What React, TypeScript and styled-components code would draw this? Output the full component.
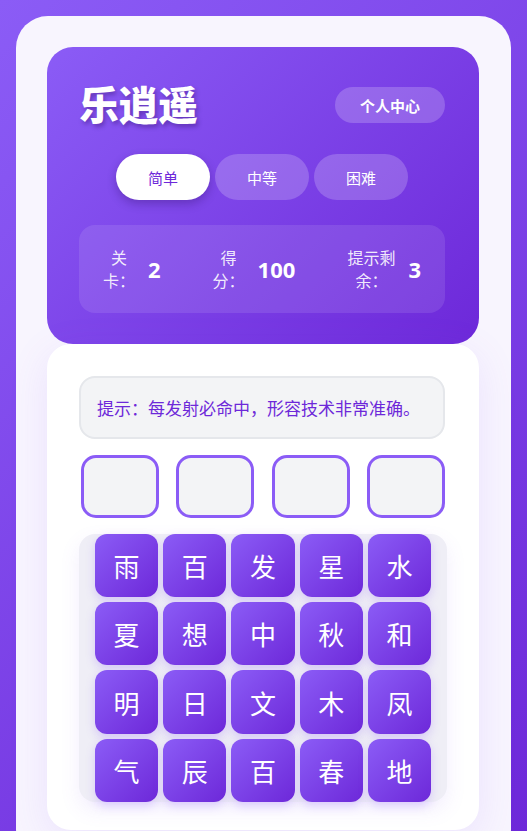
import { createGlobalStyle, styled } from "styled-components";

const GlobalStyle = createGlobalStyle`
  html, body {
    margin: 0;
    min-height: 100%;
  }
  body {
    background: linear-gradient(135deg, #8b5cf6 0%, #6d28d9 100%);
    background-attachment: fixed;
    font-family: "Noto Sans", "Noto Sans CJK SC", sans-serif;
  }
`;

const LEVELS = ["简单", "中等", "困难"];

const STATS = [
  { label: "关卡：", value: "2", width: 2 },
  { label: "得分：", value: "100", width: 2 },
  { label: "提示剩余：", value: "3", width: 3 },
];

const CHARS = [
  "雨", "百", "发", "星", "水",
  "夏", "想", "中", "秋", "和",
  "明", "日", "文", "木", "凤",
  "气", "辰", "百", "春", "地",
];

const App = () => {
  return (
    <>
      <GlobalStyle />
      <Panel>
        <HeaderCard>
          <TitleRow>
            <Title>乐逍遥</Title>
            <ProfileButton>个人中心</ProfileButton>
          </TitleRow>

          <LevelRow>
            {LEVELS.map((level, i) => (
              <LevelButton key={level} $active={i === 0}>
                {level}
              </LevelButton>
            ))}
          </LevelRow>

          <StatsBox>
            {STATS.map((stat) => (
              <StatItem key={stat.label}>
                <StatLabel $width={stat.width}>{stat.label}</StatLabel>
                <StatValue>{stat.value}</StatValue>
              </StatItem>
            ))}
          </StatsBox>
        </HeaderCard>

        <GameCard>
          <HintBox>提示：每发射必命中，形容技术非常准确。</HintBox>

          <SlotRow>
            {[0, 1, 2, 3].map((i) => (
              <Slot key={i} />
            ))}
          </SlotRow>

          <CharGrid>
            {CHARS.map((c, i) => (
              <CharTile key={i}>{c}</CharTile>
            ))}
          </CharGrid>
        </GameCard>
      </Panel>
    </>
  );
};

export default App;

const Panel = styled.div`
  margin: 16px 16px 0;
  padding: 31px 32px 32px 31px;
  background: #f8f5fe;
  border-radius: 32px;
`;

const HeaderCard = styled.div`
  padding: 32px 34px 31px 32px;
  border-radius: 26px;
  background: linear-gradient(135deg, #8b5cf6 0%, #6d28d9 100%);
  color: #fff;
`;

const TitleRow = styled.div`
  display: flex;
  align-items: center;
  justify-content: space-between;
`;

const Title = styled.h1`
  margin: 0;
  font-family: "Noto Sans CJK SC", sans-serif;
  font-size: 40px;
  font-weight: 900;
  line-height: 1.2;
  letter-spacing: -0.5px;
  text-shadow: 2px 3px 4px rgba(40, 10, 90, 0.35);
`;

const ProfileButton = styled.button`
  width: 110px;
  height: 36px;
  margin-top: 4px;
  border: none;
  border-radius: 18px;
  background: rgba(255, 255, 255, 0.2);
  color: #fff;
  font-family: "Noto Sans CJK SC", sans-serif;
  font-size: 15px;
  font-weight: 700;
`;

const LevelRow = styled.div`
  display: flex;
  justify-content: center;
  gap: 5px;
  margin-top: 27px;
`;

const LevelButton = styled.button<{ $active: boolean }>`
  width: 94px;
  height: 46px;
  border: none;
  border-radius: 23px;
  font-family: "Noto Sans CJK SC", sans-serif;
  font-size: 15px;
  background: ${({ $active }) => ($active ? "#fff" : "rgba(255, 255, 255, 0.2)")};
  color: ${({ $active }) => ($active ? "#6d28d9" : "#fff")};
  box-shadow: ${({ $active }) =>
    $active ? "0 4px 10px rgba(40, 10, 90, 0.3)" : "none"};
`;

const StatsBox = styled.div`
  display: flex;
  align-items: center;
  justify-content: space-between;
  height: 88px;
  margin-top: 25px;
  padding: 0 24px;
  box-sizing: border-box;
  border-radius: 16px;
  background: rgba(255, 255, 255, 0.1);
`;

const StatItem = styled.div`
  display: flex;
  align-items: center;
  gap: 13px;
`;

const StatLabel = styled.span<{ $width: number }>`
  width: ${({ $width }) => $width}em;
  font-family: "Noto Sans CJK SC", sans-serif;
  font-size: 16px;
  line-height: 23px;
  text-align: center;
  color: rgba(255, 255, 255, 0.9);
`;

const StatValue = styled.span`
  font-family: "Noto Sans", sans-serif;
  font-size: 22px;
  font-weight: 700;
`;

const GameCard = styled.div`
  padding: 32px 34px 28px 32px;
  border-radius: 24px;
  background: #fff;
  box-shadow: 0 10px 40px rgba(139, 92, 246, 0.12);
`;

const HintBox = styled.div`
  padding: 17px 16px;
  border: 2px solid #e5e7eb;
  border-radius: 16px;
  background: #f3f4f6;
  color: #6d28d9;
  font-family: "Noto Sans CJK SC", sans-serif;
  font-size: 17px;
  line-height: 25px;
  white-space: nowrap;
`;

const SlotRow = styled.div`
  display: grid;
  grid-template-columns: repeat(4, 78px);
  justify-content: space-between;
  margin-top: 16px;
  padding: 0 0 0 2px;
`;

const Slot = styled.div`
  height: 63px;
  box-sizing: border-box;
  border: 3px solid #8b5cf6;
  border-radius: 15px;
  background: #f3f4f6;
`;

const CharGrid = styled.div`
  display: grid;
  grid-template-columns: repeat(5, 1fr);
  gap: 5px;
  margin-top: 16px;
  margin-right: -2px;
  padding: 0 16px;
  border-radius: 16px;
  background: #efeef6;
  box-shadow: 0 8px 20px rgba(139, 92, 246, 0.1);
`;

const CharTile = styled.div`
  display: flex;
  align-items: center;
  justify-content: center;
  aspect-ratio: 1;
  border-radius: 12px;
  background: linear-gradient(135deg, #8b5cf6 0%, #6d28d9 100%);
  box-shadow: 0 4px 10px rgba(139, 92, 246, 0.25);
  color: #fff;
  font-family: "Noto Sans CJK SC", sans-serif;
  font-size: 26px;
`;
